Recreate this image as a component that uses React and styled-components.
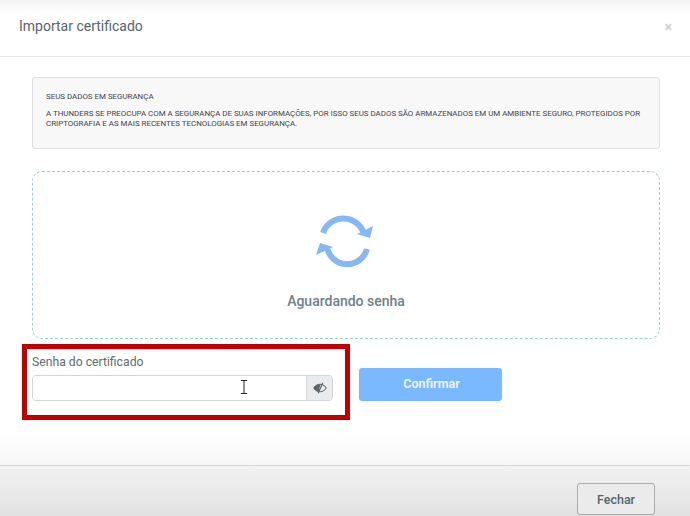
import React from "react";
import styled, { createGlobalStyle } from "styled-components";

const GlobalStyle = createGlobalStyle`
  html, body {
    margin: 0;
    padding: 0;
    background: #fff;
  }
  body {
    font-family: Roboto, "Liberation Sans", sans-serif;
    overflow: hidden;
  }
`;

const Modal = styled.div`
  width: 690px;
  height: 516px;
  display: flex;
  flex-direction: column;
  background: #fff;
`;

const Header = styled.header`
  height: 57px;
  box-sizing: border-box;
  border-bottom: 1px solid #e4e6e8;
  padding: 0 18px 5px 19px;
  display: flex;
  align-items: center;
  justify-content: space-between;
  background: linear-gradient(#f3f3f3 0, #fff 14px);
`;

const Title = styled.h1`
  margin: 0;
  font-size: 14px;
  font-weight: 400;
  color: #56646c;
`;

const Close = styled.span`
  font-size: 14px;
  font-weight: 700;
  color: #cfd2d4;
  margin-top: 3px;
`;

const Body = styled.main`
  flex: 1;
  padding: 20px 30px 0 22px;
  background: linear-gradient(#fff 375px, #f6f6f6 100%);
`;

const Notice = styled.section`
  margin-left: 10px;
  height: 72px;
  box-sizing: border-box;
  padding: 14px 13px 0;
  background: #f8f8f8;
  border: 1px solid #dedfe0;
  border-radius: 3px;
  font-size: 7.92px;
  line-height: 10px;
  color: #3c4449;
  text-transform: uppercase;
`;

const NoticeTitle = styled.div`
  margin-bottom: 7px;
`;

const DropZone = styled.section`
  margin: 22px 0 0 10px;
  height: 168px;
  box-sizing: border-box;
  border: 1px dashed #93d2d6;
  border-radius: 10px;
  display: flex;
  flex-direction: column;
  align-items: center;
  padding-top: 39px;
`;

const DropLabel = styled.div`
  margin-top: 22px;
  font-size: 14px;
  font-weight: 500;
  color: #6d818c;
`;

const FormRow = styled.div`
  margin-top: 5px;
  display: flex;
  align-items: flex-start;
  gap: 9px;
`;

const FieldFrame = styled.div`
  position: relative;
  width: 328px;
  height: 76px;
  box-sizing: border-box;
  border: 5px solid #c00000;
  padding: 6px 12px 0 5px;
`;

const FieldLabel = styled.label`
  display: block;
  font-size: 12.2px;
  line-height: 15px;
  color: #5f6b72;
  margin-bottom: 5px;
`;

const InputGroup = styled.div`
  display: flex;
  height: 26px;
  box-sizing: border-box;
  border: 1px solid #d3d5d7;
  border-radius: 4px;
  overflow: hidden;
`;

const Input = styled.input`
  flex: 1;
  min-width: 0;
  border: 0;
  outline: 0;
  background: #fff;
`;

const Addon = styled.span`
  width: 25px;
  display: flex;
  align-items: center;
  justify-content: center;
  background: #e9ecef;
  border-left: 1px solid #d3d5d7;
`;

const Cursor = styled.svg`
  position: absolute;
  left: 213px;
  top: 31px;
`;

const Confirm = styled.button`
  margin-top: 24px;
  width: 143px;
  height: 33px;
  padding: 0 0 2px 2px;
  border: 0;
  border-radius: 3px;
  background: #7ab8ff;
  color: #e8f3ff;
  font: 700 12.5px Roboto, sans-serif;
`;

const Footer = styled.footer`
  height: 51px;
  box-sizing: border-box;
  border-top: 1px solid #d8d9da;
  background: linear-gradient(#f2f2f2, #e1e1e1);
  padding: 17px 35px 0 0;
  display: flex;
  justify-content: flex-end;
`;

const CloseButton = styled.button`
  width: 78px;
  height: 32px;
  box-sizing: border-box;
  border: 1px solid #a9adb0;
  border-radius: 3px;
  background: #ebebeb;
  color: #56646c;
  font: 500 12.5px Roboto, sans-serif;
`;

const SpinnerWrap = styled.div`
  display: flex;
  margin-right: 2px;
`;

const SyncIcon = () => (
  <SpinnerWrap>
    <svg width="60" height="60" viewBox="0 0 60 60" fill="none">
      <path d="M8 22 A21.5 21.5 0 0 1 49 23" stroke="#85b8f5" strokeWidth="6" />
      <path d="M58 15 L55 27 L42 23 Z" fill="#85b8f5" />
      <path d="M52 38 A20.5 20.5 0 0 1 12 36" stroke="#85b8f5" strokeWidth="6" />
      <path d="M1 44 L5 32 L18 36 Z" fill="#85b8f5" />
    </svg>
  </SpinnerWrap>
);

const EyeIcon = () => (
  <svg width="14" height="12" viewBox="0 0 14 12" fill="none">
    <path d="M.7 6C2.5 3.4 4.6 2.2 7 2.2S11.5 3.4 13.3 6C11.5 8.6 9.4 9.8 7 9.8S2.5 8.6.7 6Z" stroke="#687176" strokeWidth="1.1" />
    <path d="M.7 6C2.5 3.4 4.6 2.2 7.5 2.2L5.6 9.6C3.8 9.2 2.2 8.1.7 6Z" fill="#5b6469" />
    <path d="M9.8 .8L5.2 11.2" stroke="#5b6469" strokeWidth="1.2" />
  </svg>
);

const App = () => (
  <>
    <GlobalStyle />
    <Modal>
      <Header>
        <Title>Importar certificado</Title>
        <Close>×</Close>
      </Header>
      <Body>
        <Notice>
          <NoticeTitle>Seus dados em segurança</NoticeTitle>
          A Thunders se preocupa com a segurança de suas informações, por isso seus dados
          são armazenados em um ambiente seguro, protegidos por criptografia e as mais
          recentes tecnologias em segurança.
        </Notice>
        <DropZone>
          <SyncIcon />
          <DropLabel>Aguardando senha</DropLabel>
        </DropZone>
        <FormRow>
          <FieldFrame>
            <FieldLabel>Senha do certificado</FieldLabel>
            <InputGroup>
              <Input type="password" />
              <Addon>
                <EyeIcon />
              </Addon>
            </InputGroup>
            <Cursor width="8" height="14" viewBox="0 0 8 14" fill="none" stroke="#222" strokeWidth="1">
              <path d="M1 .5H7M4 .5V13.5M1 13.5H7" />
            </Cursor>
          </FieldFrame>
          <Confirm>Confirmar</Confirm>
        </FormRow>
      </Body>
      <Footer>
        <CloseButton>Fechar</CloseButton>
      </Footer>
    </Modal>
  </>
);

export default App;
